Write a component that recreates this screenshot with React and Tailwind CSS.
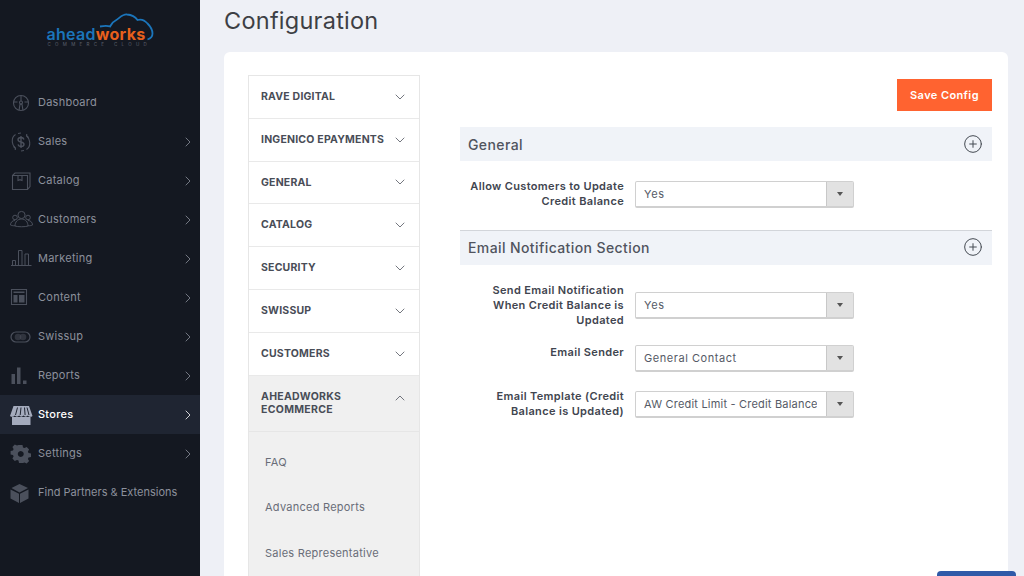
import React from "react";
import { ChevronDown, ChevronRight, ChevronUp, CirclePlus } from "lucide-react";

const iconClass = "w-[24px] h-[22px] shrink-0";

// Sidebar icons, drawn 1:1 on a 24x22 box
const icons = {
  dashboard: (
    <svg viewBox="0 0 24 22" className={iconClass} fill="none" stroke="currentColor" strokeWidth="1.1">
      <circle cx="11" cy="11" r="7.500" />
      <path d="M11 3.500v5.500M3.500 10h4M14.500 10h4M9 18.300l1-6h2l1 6" />
      <circle cx="11" cy="10.500" r="1.500" />
    </svg>
  ),
  sales: (
    <svg viewBox="0 0 24 22" className={iconClass} fill="none" stroke="currentColor" strokeWidth="1.1">
      <path d="M5.500 3.500C3 5 2 8 2.300 11c.2 2.500 1.300 4.500 3 6M16.500 18.500c2.500-1.500 3.500-4.500 3.200-7.500-.2-2.500-1.300-4.500-3-6M8 2.500l3-.5M14 19.500l-3 .5" />
      <path d="M3.500 15.500l2 1.800-.3 1.700M18.500 6.500l-2-1.800.3-1.700" />
      <path d="M14 8.500c-.4-1.300-1.500-2-3-2-1.700 0-3 .9-3 2.200 0 3 6 1.600 6 4.600 0 1.300-1.300 2.200-3 2.200-1.500 0-2.600-.7-3-2M11 5v12" strokeWidth="1.400" />
    </svg>
  ),
  catalog: (
    <svg viewBox="0 0 24 22" className={iconClass} fill="none" stroke="currentColor" strokeWidth="1.1">
      <path d="M2.500 5.500h15v14h-15zM2.500 5.500l2.500-2.500h15v13.500l-2.500 3" />
      <path d="M8 5.500v5l2-.8 2 .8v-5" />
    </svg>
  ),
  customers: (
    <svg viewBox="0 0 24 22" className={iconClass} fill="none" stroke="currentColor" strokeWidth="1">
      <circle cx="11.500" cy="6" r="3.600" />
      <circle cx="5" cy="8.500" r="2.300" />
      <circle cx="18" cy="8.500" r="2.300" />
      <path d="M5 17c0-4 2.500-7 6.500-7s6.500 3 6.500 7c-2.500 1-10.500 1-13 0z" />
      <path d="M5 11.500c-2.500 0-4.500 1.800-4.500 4.500.8.500 2.400.8 4.500.8M18 11.500c2.500 0 4.500 1.800 4.500 4.500-.8.500-2.400.8-4.500.8" />
    </svg>
  ),
  marketing: (
    <svg viewBox="0 0 24 22" className={iconClass} fill="none" stroke="currentColor" strokeWidth="1">
      <path d="M1 17.500h20.500M2.500 17v-4.500h3V17M8.500 17V2.500h3.500V17M15 17V6h3.500v11" />
    </svg>
  ),
  content: (
    <svg viewBox="0 0 24 22" className={iconClass} fill="none" stroke="currentColor" strokeWidth="1.100">
      <path d="M1.500 2.500h15v15h-15z" />
      <path d="M3.500 4.500h11v1.600h-11zM3.500 8h4v7.500h-4zM9 8h5.500v7.500H9z" fill="currentColor" stroke="none" />
    </svg>
  ),
  swissup: (
    <svg viewBox="0 0 24 22" className={iconClass} fill="none" stroke="currentColor" strokeWidth="1.200">
      <rect x="1" y="6" width="19" height="10" rx="5" />
      <circle cx="8" cy="11" r="3.300" fill="currentColor" opacity="0.5" stroke="none" />
      <circle cx="13" cy="11" r="3.300" fill="currentColor" opacity="0.5" stroke="none" />
    </svg>
  ),
  reports: (
    <svg viewBox="0 0 24 22" className={iconClass} fill="currentColor">
      <path d="M1.500 9h3.500v10H1.500zM7 2.500h3.500V19H7zM13 15.500h3.500V19H13z" />
    </svg>
  ),
  stores: (
    <svg viewBox="0 0 24 22" className={iconClass} fill="currentColor">
      <path d="M2 13h18.500v8H2z" />
      <path d="M3.500 2h15.500l3.500 10c-1.500 1.400-3.800 1-4.600-.4-1.100 1.400-3.300 1.400-4.400 0-1.100 1.400-3.300 1.400-4.400 0-1.100 1.400-3.300 1.400-4.400 0-.8 1.400-3.100 1.800-4.700.4z" />
      <path d="M7.500 3.500l-2 7.500M11 3.500l-.8 7.500M14.500 3.500l.6 7.500M17 3.500l2 7.500" stroke="#1f2532" strokeWidth="1" fill="none" />
    </svg>
  ),
  settings: (
    <svg viewBox="0 0 24 22" className={iconClass} fill="currentColor">
      <path
        fillRule="evenodd"
        d="M7.500 2h3.500l.5 2.400 1.500.7 2.200-1.200 2.400 2.500-1.200 2.100.6 1.500 2.500.5v3.500l-2.500.5-.6 1.500 1.200 2.100-2.400 2.500-2.200-1.200-1.500.7L11 20H7.500L7 17.600l-1.500-.7-2.200 1.200L.9 15.600l1.200-2.100-.6-1.500L-.9 11.500V8l2.400-.5.6-1.500L.9 3.900 3.300 1.400l2.200 1.200L7 1.900z M9.250 8a3 3 0 1 0 .01 0z"
        transform="translate(1.500 0)"
      />
    </svg>
  ),
  partners: (
    <svg viewBox="0 0 24 22" className={iconClass} fill="currentColor">
      <path d="M1.500 6l8-4 8.500 4-8.500 4.500z" />
      <path d="M.5 7.500l8.500 4.300V21L.5 16.500zM10 11.800l8.500-4.300v9L10 21z" />
    </svg>
  ),
};

const menu = [
  { label: "Dashboard", icon: "dashboard" },
  { label: "Sales", icon: "sales", arrow: true },
  { label: "Catalog", icon: "catalog", arrow: true },
  { label: "Customers", icon: "customers", arrow: true },
  { label: "Marketing", icon: "marketing", arrow: true },
  { label: "Content", icon: "content", arrow: true },
  { label: "Swissup", icon: "swissup", arrow: true },
  { label: "Reports", icon: "reports", arrow: true },
  { label: "Stores", icon: "stores", arrow: true, active: true },
  { label: "Settings", icon: "settings", arrow: true },
  { label: "Find Partners & Extensions", icon: "partners", tight: true },
];

const tabs = ["RAVE DIGITAL", "INGENICO EPAYMENTS", "GENERAL", "CATALOG", "SECURITY", "SWISSUP", "CUSTOMERS"];

const SelectBox = ({ value, tight }) => (
  <div className="w-[219px] h-[27px] shrink-0 flex bg-white border border-[#d0d0d0] border-b-2 rounded-[2px]">
    <div
      className={`flex-1 min-w-0 overflow-hidden whitespace-nowrap ml-[8px] mr-[9px] text-[11px] leading-[25px] text-[#555a66] ${
        tight ? "tracking-[0.2px]" : "tracking-[0.55px]"
      }`}
    >
      {value}
    </div>
    <div className="w-[27px] shrink-0 bg-[#e2e2e2] border-l border-[#c8c8c8] flex items-center justify-center">
      <div className="w-0 h-0 border-l-[3.5px] border-r-[3.5px] border-t-[4px] border-l-transparent border-r-transparent border-t-[#555]" />
    </div>
  </div>
);

const Field = ({ lines, value, tight, className }) => (
  <div className={`flex gap-[11px] ${className}`}>
    <div className="w-[164px] shrink-0 text-right text-[11px] leading-[15px] font-semibold text-[#41454f] tracking-[0.35px] whitespace-nowrap">
      {lines.map((line) => (
        <div key={line}>{line}</div>
      ))}
    </div>
    <SelectBox value={value} tight={tight} />
  </div>
);

const SectionBar = ({ title, className }) => (
  <div className={`flex items-center justify-between bg-[#f0f3f8] pl-[8px] pr-[9px] ${className}`}>
    <span className="text-[14px] font-medium text-[#50545e] tracking-[0.4px]">{title}</span>
    <CirclePlus size={20} strokeWidth={1.2} className="text-[#444a52]" />
  </div>
);

export default function App() {
  return (
    <div className="relative flex h-[576px] w-[1024px] overflow-hidden bg-[#eef0f6] font-['Inter','Liberation_Sans',sans-serif]">
      {/* Sidebar */}
      <aside className="w-[200px] shrink-0 bg-[#141821]">
        <div className="h-[83px] pt-[13px] flex justify-center">
          <div className="relative w-[107px] h-[34px]">
            <svg viewBox="0 0 107 34" className="absolute inset-0 w-full h-full" fill="none">
              <path
                d="M53 13.500c4-.8 8-.8 10 0 1.500-3 4-5.500 7-7 3-2 6-5.500 10-5 4 .3 8 2 10.500 5.500 3-1 7 0 10 3.500 3 3 5 7 5 10 0 3-2 5-5 6"
                stroke="#1b75bb"
                strokeWidth="1.800"
              />
            </svg>
            <div className="absolute left-0 top-[13px] whitespace-nowrap text-[16px] leading-[16px] font-semibold tracking-[0.3px]">
              <span className="text-[#1b75bb]">ahead</span>
              <span className="text-[#e8601c] font-bold">works</span>
            </div>
            <div className="absolute left-[1px] top-[29px] whitespace-nowrap text-[4.5px] leading-[6px] tracking-[4.300px] text-[#5d626e]">
              COMMERCE CLOUD
            </div>
          </div>
        </div>
        <nav>
          {menu.map((item) => (
            <div
              key={item.label}
              className={`flex h-[39px] items-center pl-[10px] pr-[4px] ${item.active ? "bg-[#1f2532]" : ""}`}
            >
              <span className={`w-[28px] ${item.active ? "text-[#a4abbd]" : "text-[#4b505c]"}`}>{icons[item.icon]}</span>
              <span
                className={`flex-1 text-[11px] whitespace-nowrap ${item.tight ? "tracking-normal" : "tracking-[0.25px]"} ${
                  item.active ? "text-white font-medium" : "text-[#8c909c]"
                }`}
              >
                {item.label}
              </span>
              {item.arrow && (
                <ChevronRight size={16} strokeWidth={1.2} className={item.active ? "text-white" : "text-[#8c909c]"} />
              )}
            </div>
          ))}
        </nav>
      </aside>

      {/* Main */}
      <main className="flex-1 min-w-0 pl-[24px] pr-[16px]">
        <h1 className="h-[52px] pt-[5px] text-[23.5px] leading-[32px] text-[#3d3f45] tracking-[0.25px]">Configuration</h1>
        <div className="flex h-[600px] gap-[40px] rounded-[6px] bg-white pl-[24px] pr-[16px] pt-[23px]">
          {/* Config tabs */}
          <div className="w-[172px] shrink-0 border border-[#e6e6e6] border-b-0 self-start">
            {tabs.map((tab) => (
              <div key={tab} className="flex h-[42.8px] items-center justify-between border-b border-[#e9e9e9] pl-[12px] pr-[11px]">
                <span className="text-[10.5px] font-bold text-[#494d57] whitespace-nowrap tracking-[0.2px]">{tab}</span>
                <ChevronDown size={16} strokeWidth={1.2} className="text-[#50545e] shrink-0" />
              </div>
            ))}
            <div className="bg-[#f0f0f0] h-[300px]">
              <div className="flex h-[56px] justify-between border-b border-[#e6e6e6] pl-[12px] pr-[11px] pt-[14px]">
                <span className="text-[10.5px] leading-[13.500px] font-bold text-[#494d57] tracking-[0.3px]">
                  AHEADWORKS
                  <br />
                  ECOMMERCE
                </span>
                <ChevronUp size={16} strokeWidth={1.2} className="text-[#50545e] shrink-0" />
              </div>
              <div className="pl-[16px] pt-[7px] text-[11px] text-[#696d78] tracking-[0.25px]">
                <div className="h-[45.5px] leading-[46px]">FAQ</div>
                <div className="h-[45.5px] leading-[46px]">Advanced Reports</div>
                <div className="h-[45.5px] leading-[46px]">Sales Representative</div>
              </div>
            </div>
          </div>

          {/* Settings */}
          <div className="flex-1 min-w-0 pt-[4px]">
            <div className="flex justify-end">
              <button className="w-[95px] h-[32px] bg-[#ff6330] text-white text-[11px] font-semibold tracking-[0.4px]">
                Save Config
              </button>
            </div>
            <SectionBar title="General" className="mt-[16px] h-[34px]" />
            <Field lines={["Allow Customers to Update", "Credit Balance"]} value="Yes" className="mt-[18px] items-center" />
            <SectionBar title="Email Notification Section" className="mt-[21px] h-[35px] pb-[2px] border-t border-[#d2d5da]" />
            <Field
              lines={["Send Email Notification", "When Credit Balance is", "Updated"]}
              value="Yes"
              className="mt-[18px] items-center"
            />
            <Field lines={["Email Sender"]} value="General Contact" className="mt-[17px] items-start" />
            <Field
              lines={["Email Template (Credit", "Balance is Updated)"]}
              value="AW Credit Limit - Credit Balance Updated"
              tight
              className="mt-[17px] items-center"
            />
          </div>
        </div>
      </main>

      {/* Help button peeking in from the bottom edge */}
      <div className="absolute left-[937px] top-[571px] w-[79px] h-[10px] rounded-t-[4px] bg-[#2f5aa8]" />
    </div>
  );
}
